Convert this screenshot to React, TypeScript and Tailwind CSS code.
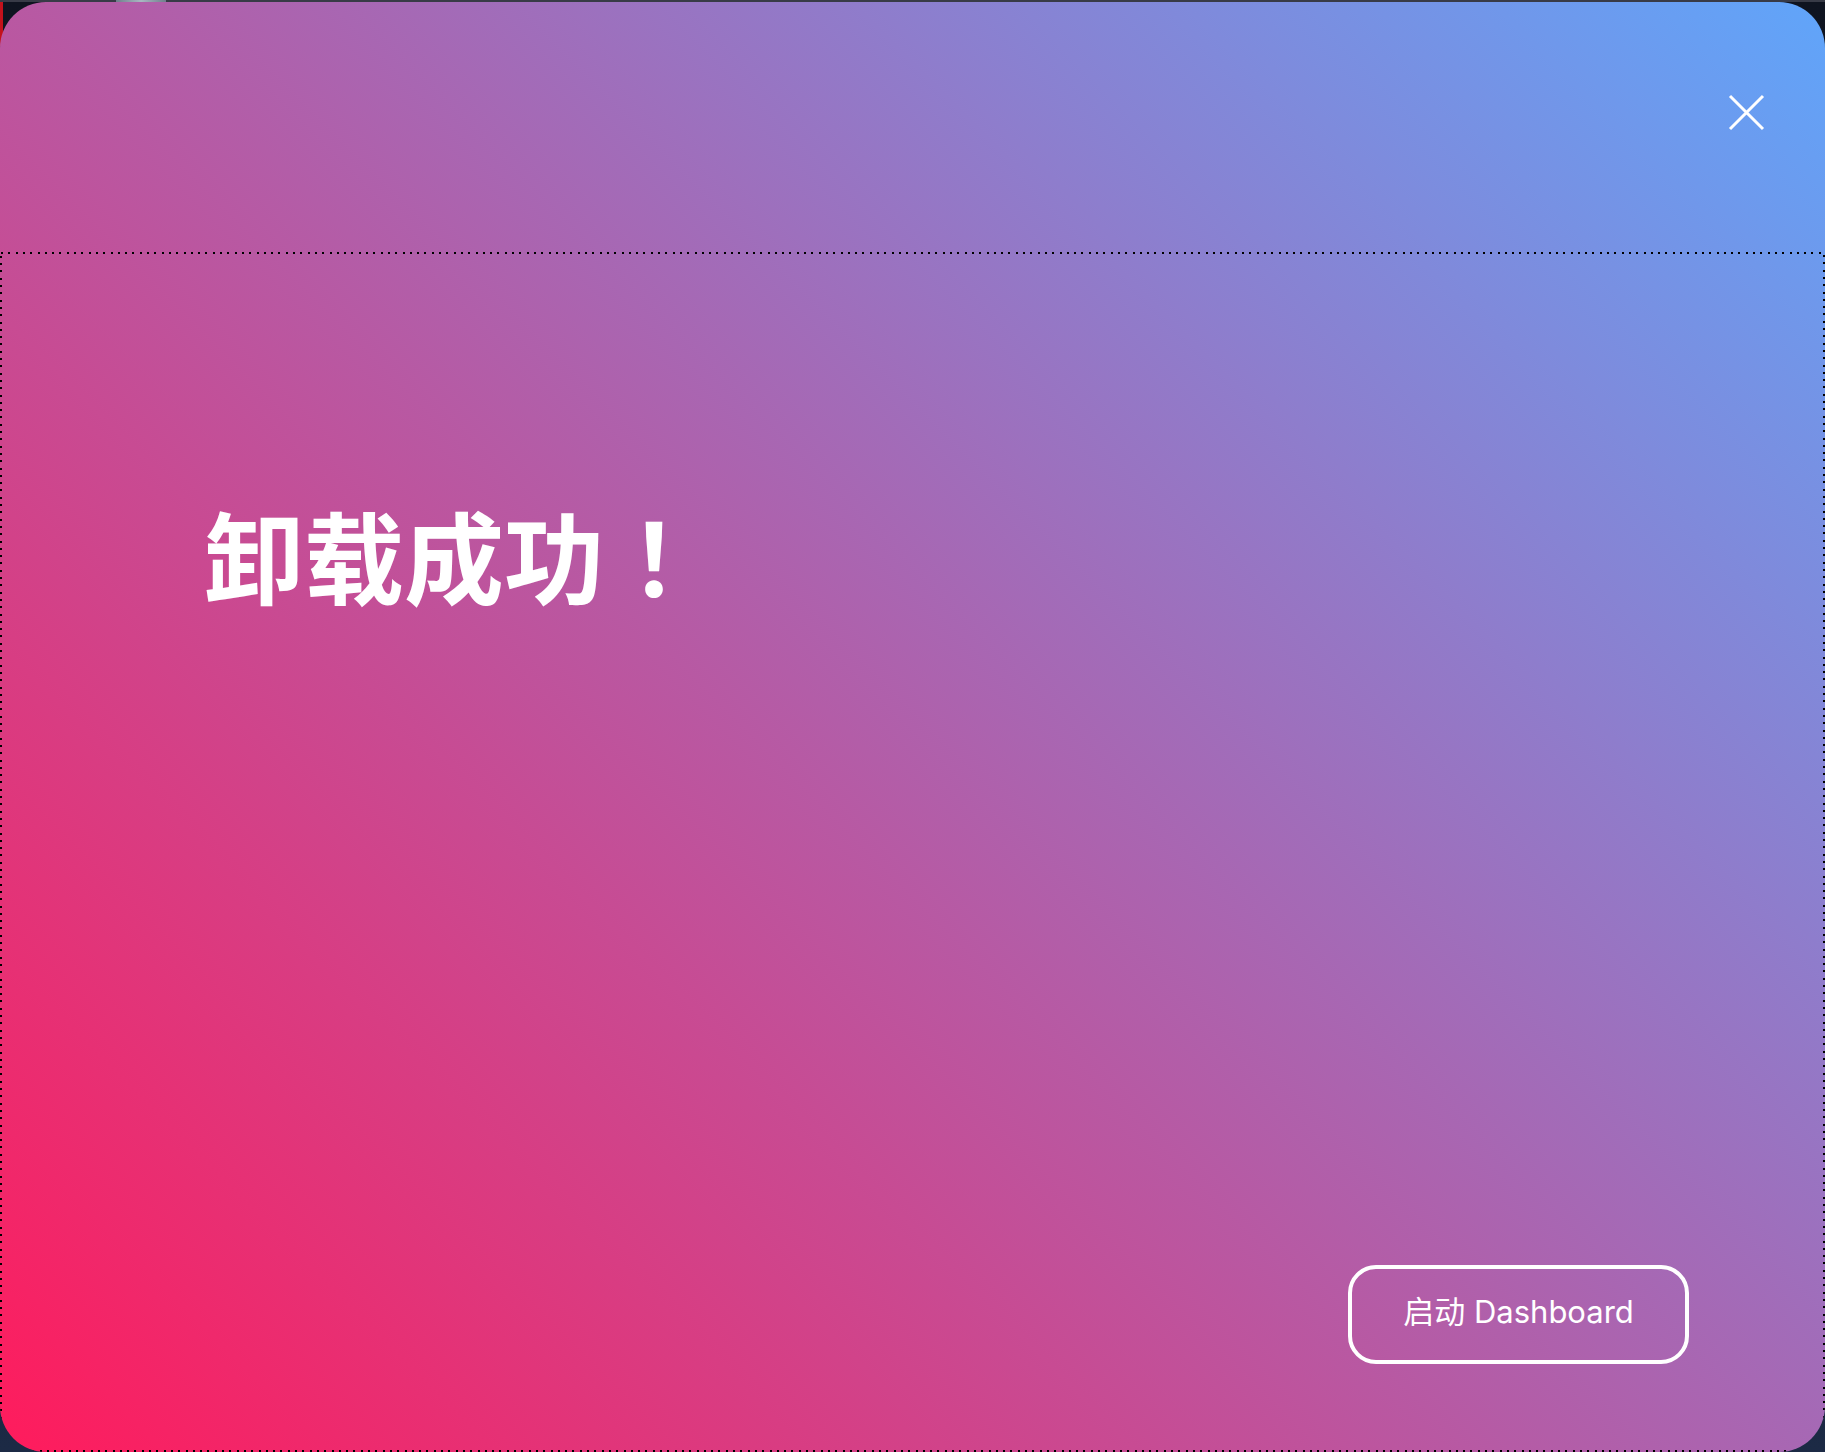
import React from "react";

export default function App() {
  return (
    <div className="relative w-[1825px] h-[1452px] overflow-hidden flex flex-col bg-[linear-gradient(180deg,#0f1420_0%,#141c2c_50%,#1c2a45_100%)] font-['Inter','Noto_Sans_CJK_SC',sans-serif]">
      <div className="absolute left-0 top-0 w-[3px] h-[46px] bg-[#c3121c]" />
      <div className="relative h-[2px] shrink-0 bg-[#383b47] flex">
        <div className="ml-[116px] w-[50px] h-[2px] bg-[linear-gradient(90deg,#6f7f8c,#a9b8c2,#6f7f8c)]" />
      </div>
      <div className="relative flex-1 flex flex-col rounded-[46px] overflow-hidden bg-[linear-gradient(45deg,#ff1b5c,#60a5fa)]">
        <header className="h-[250px] shrink-0 flex justify-end items-start pt-[90px] pr-[59px]">
          <button className="w-[40px] h-[40px] flex items-center justify-center" aria-label="关闭">
            <svg width="40" height="40" viewBox="0 0 40 40" fill="none">
              <path d="M4 4 L37 37 M37 4 L4 37" stroke="#ffffff" strokeWidth="3" />
            </svg>
          </button>
        </header>
        <section className="relative flex-1 flex flex-col">
          <svg
            className="absolute inset-0 pointer-events-none"
            width="1825"
            height="1200"
            viewBox="0 0 1825 1200"
            fill="none"
            shapeRendering="crispEdges"
          >
            <rect x="1" y="1" width="1823" height="1198" stroke="#000000" strokeWidth="2" strokeDasharray="2 5.3" />
          </svg>
          <h1 className="pt-[252px] pl-[204px] text-[100px] leading-none font-bold text-white font-['Noto_Sans_CJK_SC',sans-serif]">
            卸载成功<span className="font-['Noto_Sans_CJK_JP',sans-serif]">！</span>
          </h1>
          <div className="flex-1" />
          <div className="flex justify-end pr-[136px] pb-[88px]">
            <button className="w-[341px] h-[99px] rounded-[28px] border-4 border-white flex items-center justify-center pb-[6px] text-white text-[31px] leading-none font-['Inter','Noto_Sans_CJK_SC',sans-serif]">
              启动 Dashboard
            </button>
          </div>
        </section>
      </div>
    </div>
  );
}
